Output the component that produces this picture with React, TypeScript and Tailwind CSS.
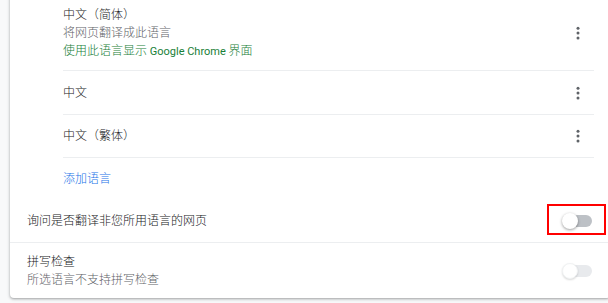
import React from "react";

function Dots() {
  return (
    <svg width="18" height="18" viewBox="0 0 24 24" className="mr-[7px] shrink-0">
      <circle cx="12" cy="5.5" r="2" fill="#5f6368" />
      <circle cx="12" cy="12" r="2" fill="#5f6368" />
      <circle cx="12" cy="18.5" r="2" fill="#5f6368" />
    </svg>
  );
}

function Toggle({ disabled, highlight }: { disabled?: boolean; highlight?: boolean }) {
  return (
    <div className="relative w-[30px] h-[16px] shrink-0">
      <div
        className={
          disabled
            ? "absolute right-0 top-[2px] w-[28px] h-[12px] rounded-full bg-[#e8eaed]"
            : "absolute right-0 top-[2px] w-[28px] h-[12px] rounded-full bg-[#bdc1c6]"
        }
      />
      <div
        className={
          disabled
            ? "absolute left-0 top-0 w-4 h-4 rounded-full bg-white shadow-[0_1px_2px_rgba(0,0,0,0.15)] border border-[#f1f3f4]"
            : "absolute left-0 top-0 w-4 h-4 rounded-full bg-white shadow-[0_1px_3px_rgba(0,0,0,0.4)]"
        }
      />
      {highlight && (
        <div className="absolute left-[-15px] right-[-14px] top-[-9px] bottom-[-6px] border-2 border-[#ff0000]" />
      )}
    </div>
  );
}

export default function App() {
  return (
    <div
      className="w-[608px] h-[303px] overflow-hidden bg-[#f8f9fa] pl-[10px] text-[12px] font-light text-[#202124]"
      style={{ fontFamily: 'Roboto, "Noto Sans CJK SC", sans-serif' }}
    >
      <div className="w-[600px] -mt-1 bg-white rounded-b-[4px] shadow-[0_1px_2px_rgba(60,64,67,0.3),0_1px_3px_1px_rgba(60,64,67,0.15)]">
        <div className="pl-[53px] pr-[16px]">
          <div className="flex items-center h-[75px] border-b border-[#eceef0] leading-[18px]">
            <div className="flex-1 flex flex-col">
              <span>中文（简体）</span>
              <span className="text-[#5f6368]">将网页翻译成此语言</span>
              <span className="text-[#188038]">
                使用此语言显示<span className="text-[11px] font-normal"> Google Chrome </span>界面
              </span>
            </div>
            <Dots />
          </div>
          <div className="flex items-center h-[44px] border-b border-[#eceef0]">
            <span className="flex-1">中文</span>
            <Dots />
          </div>
          <div className="flex items-center h-[43px] border-b border-[#eceef0]">
            <span className="flex-1">中文（繁体）</span>
            <Dots />
          </div>
          <div className="flex items-center h-[41px]">
            <span className="text-[#1a73e8]">添加语言</span>
          </div>
        </div>
        <div className="flex items-center h-[44px] pl-[17px] pr-[18px] border-b border-[#eceef0]">
          <span className="flex-1">询问是否翻译非您所用语言的网页</span>
          <Toggle highlight />
        </div>
        <div className="flex items-center h-[55px] pl-[17px] pr-[18px] leading-[18px]">
          <div className="flex-1 flex flex-col">
            <span>拼写检查</span>
            <span className="text-[#5f6368]">所选语言不支持拼写检查</span>
          </div>
          <Toggle disabled />
        </div>
      </div>
    </div>
  );
}
